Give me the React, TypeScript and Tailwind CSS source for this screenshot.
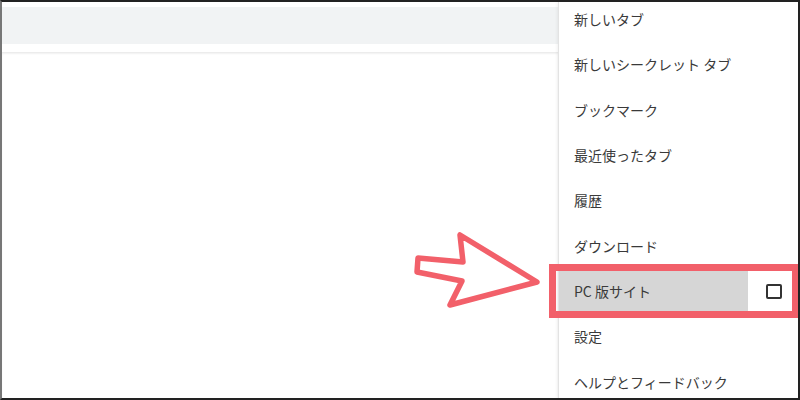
const items = [
  "新しいタブ",
  "新しいシークレット タブ",
  "ブックマーク",
  "最近使ったタブ",
  "履歴",
  "ダウンロード",
  "PC 版サイト",
  "設定",
  "ヘルプとフィードバック",
];

export default function App() {
  return (
    <div
      className="relative w-[800px] h-[400px] overflow-hidden border-2 border-[#222] border-l-[#777] bg-white flex"
      style={{ fontFamily: '"Noto Sans CJK JP", "Noto Sans", sans-serif' }}
    >
      {/* page area */}
      <div className="flex-1 flex flex-col">
        <div className="h-[5px]" />
        <div className="h-[37px] bg-[#f1f3f4]" />
        <div className="h-[8px]" />
        <div className="flex-1 border-t border-[#ececec] shadow-[inset_0_1px_2px_rgba(0,0,0,0.06)]" />
      </div>

      {/* overflow menu */}
      <div className="w-[240px] border-l border-[#e3e3e3] bg-white shadow-[-1px_0_3px_rgba(0,0,0,0.06)]">
        <div className="-mt-[5px] flex flex-col">
          {items.map((label) =>
            label === "PC 版サイト" ? (
              <div key={label} className="h-[45.33px] flex">
                <div className="flex-1 bg-[#d6d6d6] flex items-center pl-[15px] text-[14px] text-[#3a3a3a]">
                  {label}
                </div>
                <div className="w-[50px] flex items-center pl-[18px]">
                  <div className="w-[16px] h-[15px] border-2 border-[#333] rounded-[2px]" />
                </div>
              </div>
            ) : (
              <div
                key={label}
                className="h-[45.33px] flex items-center pl-[15px] text-[14px] text-[#3a3a3a]"
              >
                {label}
              </div>
            )
          )}
        </div>
      </div>

      {/* annotation: highlight box */}
      <div className="absolute left-[547px] top-[262px] w-[250px] h-[54px] border-[7px] border-[#f2606a]" />

      {/* annotation: arrow */}
      <svg
        className="absolute left-[398px] top-[218px]"
        width="160"
        height="110"
        viewBox="0 0 160 110"
      >
        <polygon
          points="137,62 60,15 63,42 18,38 17,52 62,61 50,85"
          fill="white"
          stroke="#f2606a"
          strokeWidth="5.5"
          strokeLinejoin="round"
        />
      </svg>
    </div>
  );
}
